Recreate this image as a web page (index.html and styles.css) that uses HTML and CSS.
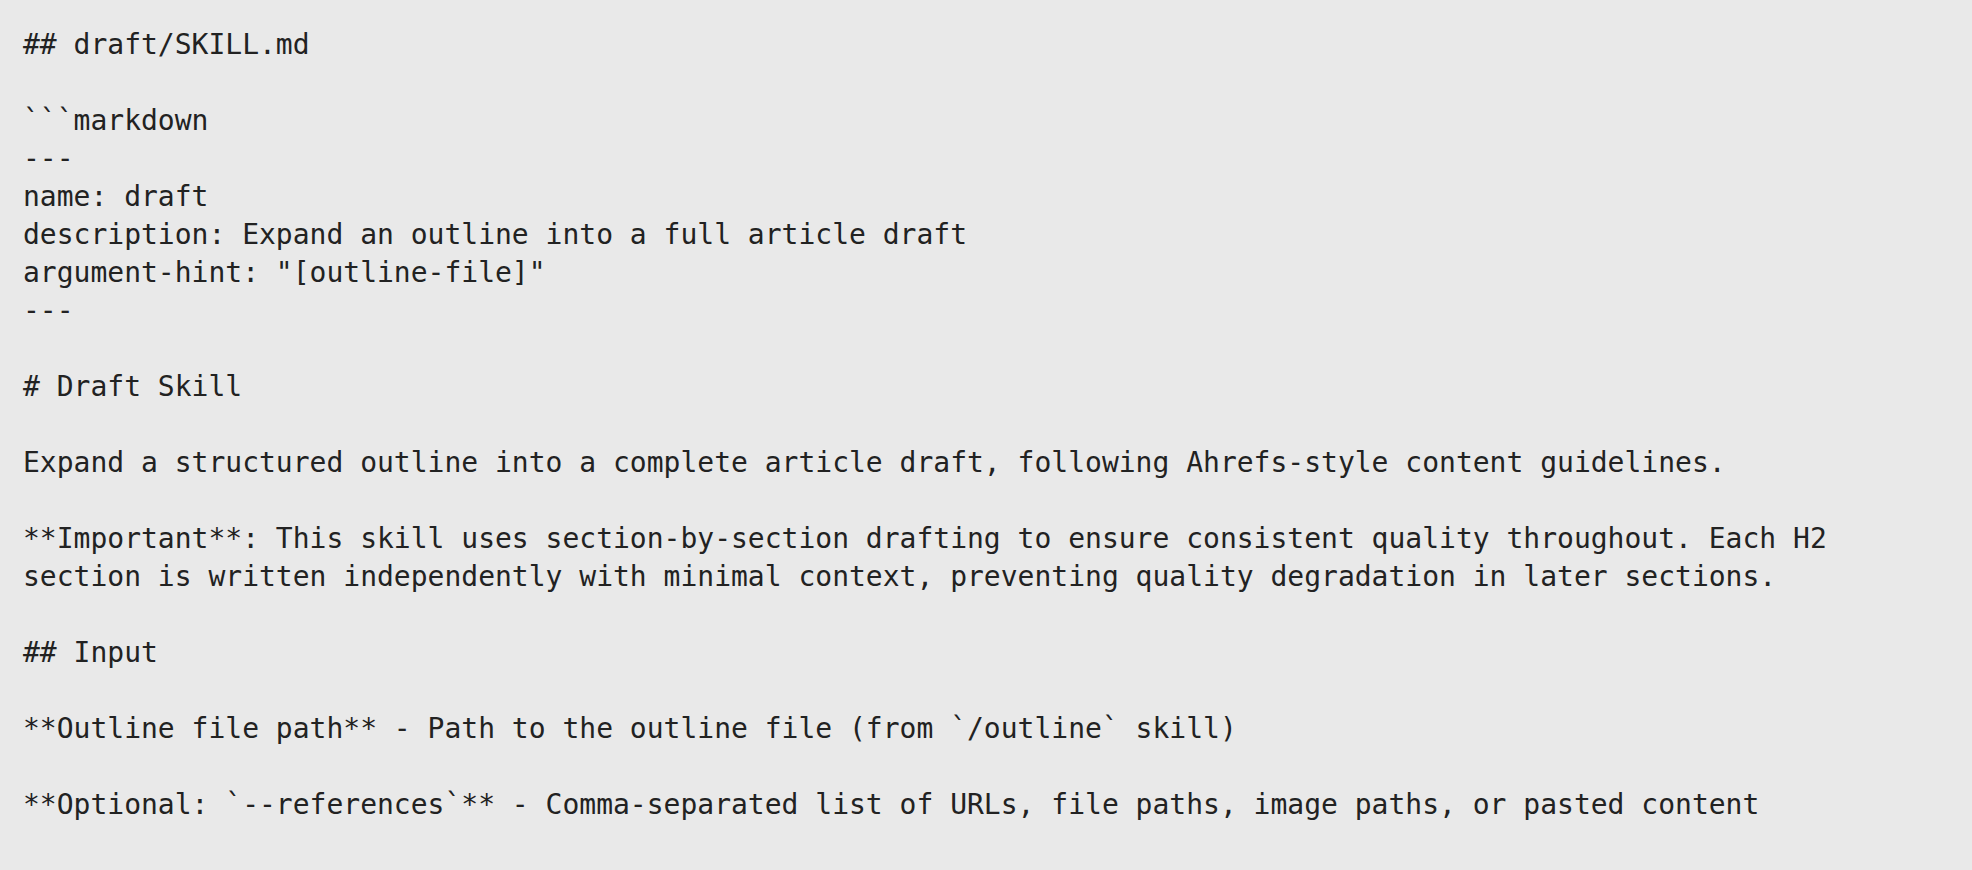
FILE: index.html
```html
<!DOCTYPE html>
<html lang="en">
<head>
<meta charset="utf-8">
<title>draft/SKILL.md</title>
<link rel="stylesheet" href="styles.css">
</head>
<body class="page">
<pre class="doc">## draft/SKILL.md

```markdown
---
name: draft
description: Expand an outline into a full article draft
argument-hint: "[outline-file]"
---

# Draft Skill

Expand a structured outline into a complete article draft, following Ahrefs-style content guidelines.

**Important**: This skill uses section-by-section drafting to ensure consistent quality throughout. Each H2
section is written independently with minimal context, preventing quality degradation in later sections.

## Input

**Outline file path** - Path to the outline file (from `/outline` skill)

**Optional: `--references`** - Comma-separated list of URLs, file paths, image paths, or pasted content</pre>
</body>
</html>
```

FILE: styles.css
```css
html, body {
  margin: 0;
  padding: 0;
}

.page {
  background: #e9e9e9;
  width: 1972px;
  height: 870px;
  overflow: hidden;
}

.doc {
  margin: 0;
  padding: 26px 0 0 23px;
  font-family: "DejaVu Sans Mono", "Liberation Mono", monospace;
  font-size: 28px;
  line-height: 38px;
  color: #222222;
  white-space: pre;
}
```
